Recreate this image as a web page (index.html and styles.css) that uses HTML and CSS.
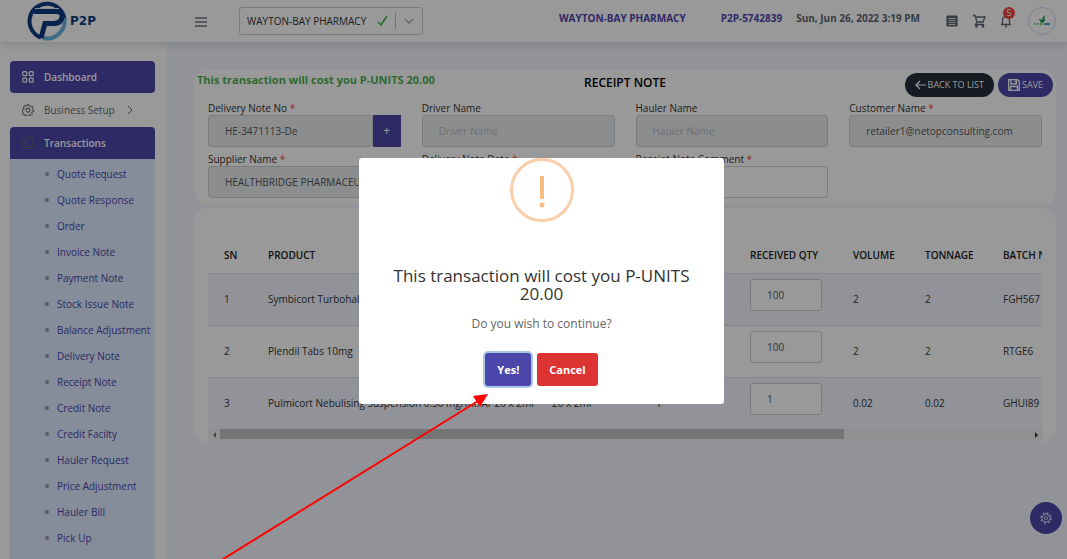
FILE: index.html
```html
<!DOCTYPE html>
<html lang="en">
<head>
    <meta charset="UTF-8">
    <meta name="viewport" content="width=device-width, initial-scale=1.0">
    <title>P2P - Receipt Note</title>
    <link rel="stylesheet" href="styles.css">
</head>
<body>
    <header class="topbar">
        <a href="#" class="brand">
            <svg width="42" height="42" viewBox="0 0 42 42" fill="none">
                <path d="M15 37.600A17.500 17.500 0 1 1 38.500 20" stroke="#0d3b80" stroke-width="4"/>
                <path d="M38.300 18A17.500 17.500 0 0 1 17 38" stroke="#69b4e0" stroke-width="4"/>
                <path d="M8 11.500H30Q37 11.500 36 17Q35 23.500 28 23.500H19L15 38" stroke="#0d3b80" stroke-width="5"/>
                <path d="M9 8.500H33" stroke="#dfe9f5" stroke-width="1"/>
            </svg>
            <span>P2P</span>
        </a>
        <button class="icon-btn menu-btn" aria-label="Toggle menu">
            <svg width="14" height="12" viewBox="0 0 14 12" stroke="#6b7280" stroke-width="1.500"><path d="M1 2h12M1 6h12M1 10h12"/></svg>
        </button>
        <div class="branch">
            <select aria-label="Branch">
                <option>WAYTON-BAY PHARMACY</option>
            </select>
            <svg class="branch-icons" width="38" height="18" viewBox="0 0 38 18" fill="none">
                <path d="M1 10l3 3 6-9" stroke="#4caf50" stroke-width="1.500"/>
                <path d="M18.500 1v16" stroke="#bbb"/>
                <path d="M28 7l4 4 4-4" stroke="#aaa" stroke-width="1.500"/>
            </svg>
        </div>
        <div class="topbar-info">
            <span class="org">WAYTON-BAY PHARMACY</span>
            <span class="code">P2P-5742839</span>
            <span>Sun, Jun 26, 2022 3:19 PM</span>
        </div>
        <div class="topbar-icons">
            <button class="icon-btn" aria-label="Documents">
                <svg width="12" height="12" viewBox="0 0 12 12"><rect x=".5" y=".5" width="11" height="11" rx="1" fill="#5d636e"/><path d="M2.500 3.500h7M2.500 5.500h7M2.500 7.500h7M2.500 9.500h7" stroke="#fff" stroke-width=".8"/></svg>
            </button>
            <button class="icon-btn" aria-label="Cart">
                <svg width="14" height="14" viewBox="0 0 14 14" fill="none" stroke="#5d636e" stroke-width="1.300"><path d="M1 1.500h2l2 6.500h6l2-5H4M5 8L3.500 10.500H12"/><circle cx="4.500" cy="12.300" r=".8"/><circle cx="11" cy="12.300" r=".8"/></svg>
            </button>
            <button class="icon-btn bell" aria-label="Notifications">
                <svg width="12" height="14" viewBox="0 0 12 14" fill="none" stroke="#5d636e" stroke-width="1.300"><path d="M1 10.500h10M2.500 10V6a3.500 3.500 0 0 1 7 0v4M5 12.500h2"/></svg>
                <span class="badge">5</span>
            </button>
            <a href="#" class="avatar" aria-label="Profile">
                <svg width="18" height="12" viewBox="0 0 18 12"><path d="M6 4q2 0 3 1q0-3 3-5q-1 3 0 5q-1 3-3 3q-2-1-3-4" fill="#1ba05c"/><path d="M1 9h11" stroke="#66c07a" stroke-width="1.500" stroke-dasharray="2 1"/><path d="M12 9h5" stroke="#3f9ed8" stroke-width="2"/></svg>
            </a>
        </div>
    </header>

    <div class="layout">
        <nav class="sidebar">
            <a href="#" class="nav-item active">
                <svg width="12" height="12" viewBox="0 0 12 12" fill="none" stroke="#fff" stroke-width="1.200"><rect x=".7" y=".7" width="4" height="4" rx="1"/><rect x="7.200" y=".7" width="4" height="4" rx="1"/><rect x=".7" y="7.200" width="4" height="4" rx="1"/><rect x="7.200" y="7.200" width="4" height="4" rx="1"/></svg>
                <span>Dashboard</span>
            </a>
            <a href="#" class="nav-item">
                <svg width="12" height="12" viewBox="0 0 24 24" fill="none" stroke="#555" stroke-width="2"><path d="M10 1.500h4l.7 3 2.300 1 2.600-1.700 2.700 2.700L20.600 9l1 2.400 1.400.6v3l-2.700.6-1 2 1.500 2.600-2.500 2.500-2.600-1.500-2 .8-.7 2.500h-4l-.7-2.500-2-.8-2.600 1.500-2.500-2.500 1.500-2.600-1-2L1 15v-4l2.500-.7.9-2L2.900 5.700 5.600 3l2.600 1.500 1.200-.5z"/><circle cx="12" cy="12.500" r="4"/></svg>
                <span>Business Setup</span>
                <svg class="chevron" width="6" height="10" viewBox="0 0 6 10" fill="none" stroke="#666"><path d="M1 1l4 4-4 4"/></svg>
            </a>
            <a href="#" class="nav-item active open">
                <svg width="12" height="12" viewBox="0 0 12 12" fill="none" stroke="#666" stroke-width="1"><rect x="3" y=".5" width="8" height="9" rx="1"/><path d="M1 3v7.500q0 1 1 1h6"/></svg>
                <span>Transactions</span>
                <svg class="chevron" width="8" height="6" viewBox="0 0 8 6" fill="none" stroke="#5b58a0"><path d="M1 1l3 3 3-3"/></svg>
            </a>
            <ul class="subnav">
                <li><a href="#">Quote Request</a></li>
                <li><a href="#">Quote Response</a></li>
                <li><a href="#">Order</a></li>
                <li><a href="#">Invoice Note</a></li>
                <li><a href="#">Payment Note</a></li>
                <li><a href="#">Stock Issue Note</a></li>
                <li><a href="#">Balance Adjustment</a></li>
                <li><a href="#">Delivery Note</a></li>
                <li><a href="#">Receipt Note</a></li>
                <li><a href="#">Credit Note</a></li>
                <li><a href="#">Credit Facilty</a></li>
                <li><a href="#">Hauler Request</a></li>
                <li><a href="#">Price Adjustment</a></li>
                <li><a href="#">Hauler Bill</a></li>
                <li><a href="#">Pick Up</a></li>
            </ul>
        </nav>

        <main class="content">
            <section class="card">
                <div class="card-head">
                    <p class="cost">This transaction will cost you P-UNITS 20.00</p>
                    <h1>RECEIPT NOTE</h1>
                    <div class="actions">
                        <button class="pill dark">
                            <svg width="11" height="10" viewBox="0 0 11 10" fill="none" stroke="#fff" stroke-width="1.200"><path d="M11 5H1M5 1L1 5l4 4"/></svg>
                            BACK TO LIST
                        </button>
                        <button class="pill">
                            <svg width="12" height="12" viewBox="0 0 12 12" fill="none" stroke="#fff" stroke-width="1.300"><path d="M.7.700h9l1.600 1.600v9H.7zM3 1v4h5.500V1M2.500 11V7.500h7V11"/><path d="M7 1.500v2"/></svg>
                            SAVE
                        </button>
                    </div>
                </div>
                <form class="fields">
                    <div class="field">
                        <label for="noteNo">Delivery Note No <i>*</i></label>
                        <div class="input-group">
                            <input type="text" id="noteNo" value="HE-3471113-De" disabled>
                            <button type="button">+</button>
                        </div>
                    </div>
                    <div class="field">
                        <label for="driver">Driver Name</label>
                        <input type="text" id="driver" placeholder="Driver Name" disabled>
                    </div>
                    <div class="field">
                        <label for="hauler">Hauler Name</label>
                        <input type="text" id="hauler" placeholder="Hauler Name" disabled>
                    </div>
                    <div class="field">
                        <label for="customer">Customer Name <i>*</i></label>
                        <input type="text" id="customer" value="retailer1@netopconsulting.com" disabled>
                    </div>
                    <div class="field">
                        <label for="supplier">Supplier Name <i>*</i></label>
                        <input type="text" id="supplier" value="HEALTHBRIDGE PHARMACEUTICALS" disabled>
                    </div>
                    <div class="field">
                        <label for="noteDate">Delivery Note Date <i>*</i></label>
                        <input type="text" id="noteDate" disabled>
                    </div>
                    <div class="field">
                        <label for="comment">Receipt Note Comment <i>*</i></label>
                        <input type="text" id="comment">
                    </div>
                </form>
            </section>

            <section class="card items">
                <div class="table-wrap">
                    <table>
                        <colgroup>
                            <col class="c-sn"><col class="c-product"><col class="c-pack"><col class="c-qty">
                            <col class="c-received"><col class="c-volume"><col class="c-tonnage"><col>
                        </colgroup>
                        <thead>
                            <tr>
                                <th>SN</th>
                                <th>PRODUCT</th>
                                <th>PACK SIZE</th>
                                <th>QTY</th>
                                <th>RECEIVED QTY</th>
                                <th>VOLUME</th>
                                <th>TONNAGE</th>
                                <th>BATCH NO</th>
                            </tr>
                        </thead>
                        <tbody>
                            <tr>
                                <td>1</td>
                                <td>Symbicort Turbohaler</td>
                                <td></td>
                                <td></td>
                                <td class="qty"><input type="text" value="100" aria-label="Received quantity 1"></td>
                                <td>2</td>
                                <td>2</td>
                                <td>FGH567</td>
                            </tr>
                            <tr>
                                <td>2</td>
                                <td>Plendil Tabs 10mg</td>
                                <td></td>
                                <td></td>
                                <td class="qty"><input type="text" value="100" aria-label="Received quantity 2"></td>
                                <td>2</td>
                                <td>2</td>
                                <td>RTGE6</td>
                            </tr>
                            <tr>
                                <td>3</td>
                                <td>Pulmicort Nebulising Suspension 0.50 mg/ml. Ar 20 x 2ml</td>
                                <td>20 x 2ml</td>
                                <td>1</td>
                                <td class="qty"><input type="text" value="1" aria-label="Received quantity 3"></td>
                                <td>0.02</td>
                                <td>0.02</td>
                                <td>GHUI89</td>
                            </tr>
                        </tbody>
                    </table>
                </div>
                <div class="scrollbar">
                    <svg width="12" height="12" viewBox="0 0 12 12"><path d="M8 3v6L5 6z" fill="#777"/></svg>
                    <div class="track"><div class="thumb"></div></div>
                    <svg width="12" height="12" viewBox="0 0 12 12"><path d="M5 3v6l3-3z" fill="#333"/></svg>
                </div>
            </section>
        </main>
    </div>

    <button class="settings-btn" aria-label="Settings">
        <svg width="14" height="14" viewBox="0 0 14 14" fill="none" stroke="#cfcde8"><circle cx="7" cy="7" r="5" stroke-width="1.800" stroke-dasharray="1.900 2.027"/><circle cx="7" cy="7" r="4"/><circle cx="7" cy="7" r="1.600"/></svg>
    </button>

    <div class="overlay">
        <div class="modal" role="dialog" aria-labelledby="modalTitle">
            <div class="warn-icon">
                <svg width="8" height="34" viewBox="0 0 8 34" fill="#f8bb86"><rect x="2" y="1" width="4" height="23"/><circle cx="4" cy="30" r="2.500"/></svg>
            </div>
            <h2 id="modalTitle">This transaction will cost you P-UNITS 20.00</h2>
            <p>Do you wish to continue?</p>
            <div class="modal-actions">
                <button class="confirm">Yes!</button>
                <button class="cancel">Cancel</button>
            </div>
        </div>
    </div>

    <svg class="pointer" width="270" height="168" viewBox="0 0 270 168">
        <path d="M0 170L258 10" stroke="#f00" stroke-width="2"/>
        <path d="M268 3L253 5L260 16z" fill="#f00"/>
    </svg>
</body>
</html>
```
FILE: styles.css
```css
* {
    box-sizing: border-box;
}

body {
    margin: 0;
    height: 100vh;
    display: flex;
    flex-direction: column;
    overflow: hidden;
    background-color: #f3f5fd;
    color: #333;
    font-family: "Open Sans", "Noto Sans", sans-serif;
    font-size: 10px;
    line-height: 14px;
}

button, input, select {
    font: inherit;
    color: inherit;
}

button {
    border: none;
    cursor: pointer;
}

a {
    text-decoration: none;
    color: inherit;
}

svg {
    flex: none;
    display: block;
}

/* Top bar */
.topbar {
    position: relative;
    z-index: 1;
    flex: none;
    display: flex;
    align-items: center;
    height: 42px;
    padding-right: 11px;
    background-color: white;
    box-shadow: 0 2px 8px rgba(60, 70, 110, 0.2);
}

.brand {
    display: flex;
    align-items: center;
    width: 167px;
    padding-left: 26px;
    gap: 2px;
    font-family: "DejaVu Sans", sans-serif;
    font-size: 12px;
    font-weight: bold;
    color: #0d3b80;
}

.icon-btn {
    position: relative;
    padding: 0;
    background: none;
}

.menu-btn {
    margin: 2px 31px 0 27px;
}

.branch {
    display: flex;
    align-items: center;
    width: 184px;
    height: 28px;
    padding: 0 7px;
    border: 1px solid #ccc;
    border-radius: 3px;
}

.branch select {
    flex: 1;
    min-width: 0;
    padding: 0;
    border: none;
    background: none;
    appearance: none;
}

.topbar-info {
    display: flex;
    flex: 1;
    justify-content: flex-end;
    padding-bottom: 6px;
    font-weight: bold;
    color: #5d636e;
}

.org {
    margin-right: 35px;
    color: #4b46aa;
}

.code {
    margin-right: 14px;
    color: #4b46aa;
}

.topbar-icons {
    display: flex;
    align-items: center;
    gap: 14px;
    margin-left: 26px;
}

.badge {
    position: absolute;
    top: -7px;
    right: -3px;
    width: 12px;
    height: 12px;
    border-radius: 50%;
    background-color: #f04444;
    color: white;
    font-size: 9px;
    line-height: 12px;
}

.avatar {
    display: flex;
    align-items: center;
    justify-content: center;
    width: 28px;
    height: 28px;
    margin-left: 2px;
    border: 1px solid #cfd8f5;
    border-radius: 50%;
}

/* Sidebar */
.layout {
    display: flex;
    flex: 1;
    min-height: 0;
}

.sidebar {
    flex: none;
    width: 167px;
    padding: 19px 12px 0 10px;
    overflow: hidden;
    background-color: white;
    font-weight: 500;
}

.nav-item {
    display: flex;
    align-items: center;
    height: 32px;
    margin-bottom: 1px;
    padding: 0 12px;
    gap: 10px;
    border-radius: 4px;
    color: #666;
}

.nav-item.active {
    background-color: #4b46aa;
    color: white;
    font-weight: 600;
}

.nav-item .chevron {
    margin-left: 2px;
}

.nav-item.open {
    margin-bottom: 0;
    border-radius: 4px 4px 0 0;
}

.nav-item.open .chevron {
    margin-left: auto;
    margin-right: 8px;
}

.subnav {
    list-style: none;
    margin: 0;
    padding: 2px 0 26px;
    background-color: #dcebff;
    color: #4b46aa;
}

.subnav a {
    display: flex;
    align-items: center;
    height: 26px;
    padding-left: 35px;
    gap: 8px;
}

.subnav a::before {
    content: "";
    width: 4px;
    height: 4px;
    border-radius: 50%;
    background-color: #999;
}

/* Content */
.content {
    flex: 1;
    min-width: 0;
    padding: 28px 11px 0 27px;
}

.card {
    margin-bottom: 3px;
    padding-bottom: 7px;
    border-radius: 14px;
    background-color: white;
}

.card-head {
    display: grid;
    grid-template-columns: 1fr auto 1fr;
    align-items: center;
    padding: 3px 3px 4px;
}

.cost {
    margin: 0;
    padding-bottom: 10px;
    font-size: 11px;
    font-weight: bold;
    color: #4caf50;
}

h1 {
    margin: 0;
    padding-bottom: 4px;
    font-size: 12px;
    font-weight: 600;
    color: black;
}

.actions {
    display: flex;
    justify-content: flex-end;
    gap: 4px;
}

.pill {
    display: flex;
    align-items: center;
    height: 24px;
    padding: 0 10px;
    gap: 2px;
    border-radius: 12px;
    background-color: #4b46aa;
    color: white;
    font-size: 9px;
}

.pill.dark {
    background-color: #252d39;
}

.fields {
    display: grid;
    grid-template-columns: repeat(4, 1fr);
    gap: 5px 21px;
    padding: 0 14px;
}

.field {
    display: flex;
    flex-direction: column;
    min-width: 0;
}

.field label i {
    color: #f04444;
    font-style: normal;
}

.field input, .qty input {
    width: 100%;
    min-width: 0;
    height: 32px;
    padding: 0 16px;
    border: 1px solid #ccd0d6;
    border-radius: 3px;
    background-color: white;
    color: #555;
}

.field input:disabled {
    background-color: #e9ecef;
}

.field input::placeholder {
    color: #b4b8bf;
}

.input-group {
    display: flex;
}

.input-group button {
    flex: none;
    width: 28px;
    background-color: #4b46aa;
    color: white;
    font-size: 12px;
}

/* Items table */
.items {
    padding: 30px 14px 1px;
}

.table-wrap {
    overflow: hidden;
}

table {
    width: 1080px;
    table-layout: fixed;
    border-collapse: collapse;
}

.c-sn { width: 44px; }
.c-product { width: 284px; }
.c-pack { width: 104px; }
.c-qty { width: 94px; }
.c-received { width: 103px; }
.c-volume { width: 72px; }
.c-tonnage { width: 78px; }

th, td {
    padding: 0 0 0 16px;
    text-align: left;
    white-space: nowrap;
}

th {
    height: 35px;
    font-weight: 600;
    color: #222;
}

td {
    height: 52px;
    border-top: 1px solid #dadef0;
}

tbody tr:nth-child(odd) {
    background-color: #f3f5fd;
}

.qty {
    padding: 5px 15px 0 16px;
    vertical-align: top;
}

.scrollbar {
    display: flex;
    height: 12px;
    background-color: #f1f1f1;
}

.track {
    flex: 1;
}

.thumb {
    width: 77%;
    height: 10px;
    background-color: #c1c1c1;
}

.settings-btn {
    position: fixed;
    right: 5px;
    bottom: 25px;
    display: flex;
    align-items: center;
    justify-content: center;
    width: 32px;
    height: 32px;
    padding: 0;
    border-radius: 50%;
    background-color: #4b46aa;
}

/* Confirmation dialog */
.overlay {
    position: fixed;
    inset: 0;
    z-index: 10;
    display: flex;
    align-items: center;
    justify-content: center;
    padding: 3px 0 0 16px;
    background-color: rgba(0, 0, 0, 0.4);
}

.modal {
    width: 365px;
    padding: 0 20px 18px;
    border-radius: 3px;
    background-color: white;
    text-align: center;
}

.warn-icon {
    display: flex;
    align-items: center;
    justify-content: center;
    width: 64px;
    height: 64px;
    margin: 0 auto 45px;
    padding-top: 4px;
    border: 3px solid #facea8;
    border-radius: 50%;
}

.modal h2 {
    margin: 0 0 12px;
    font-size: 17px;
    font-weight: 400;
    line-height: 18px;
    color: #333;
}

.modal p {
    margin: 0 0 20px;
    font-size: 12px;
    line-height: 18px;
    color: #666;
}

.modal-actions {
    display: flex;
    justify-content: center;
    gap: 6px;
}

.modal-actions button {
    height: 33px;
    padding: 0 12px;
    border-radius: 3px;
    color: white;
    font-size: 11px;
    font-weight: bold;
}

.confirm {
    background-color: #4b46aa;
    box-shadow: 0 0 0 2px #a9c8e6;
}

.cancel {
    background-color: #dd3333;
}

/* Arrow pointing at the confirm button */
.pointer {
    position: fixed;
    left: 220px;
    bottom: 0;
    z-index: 20;
}
```
